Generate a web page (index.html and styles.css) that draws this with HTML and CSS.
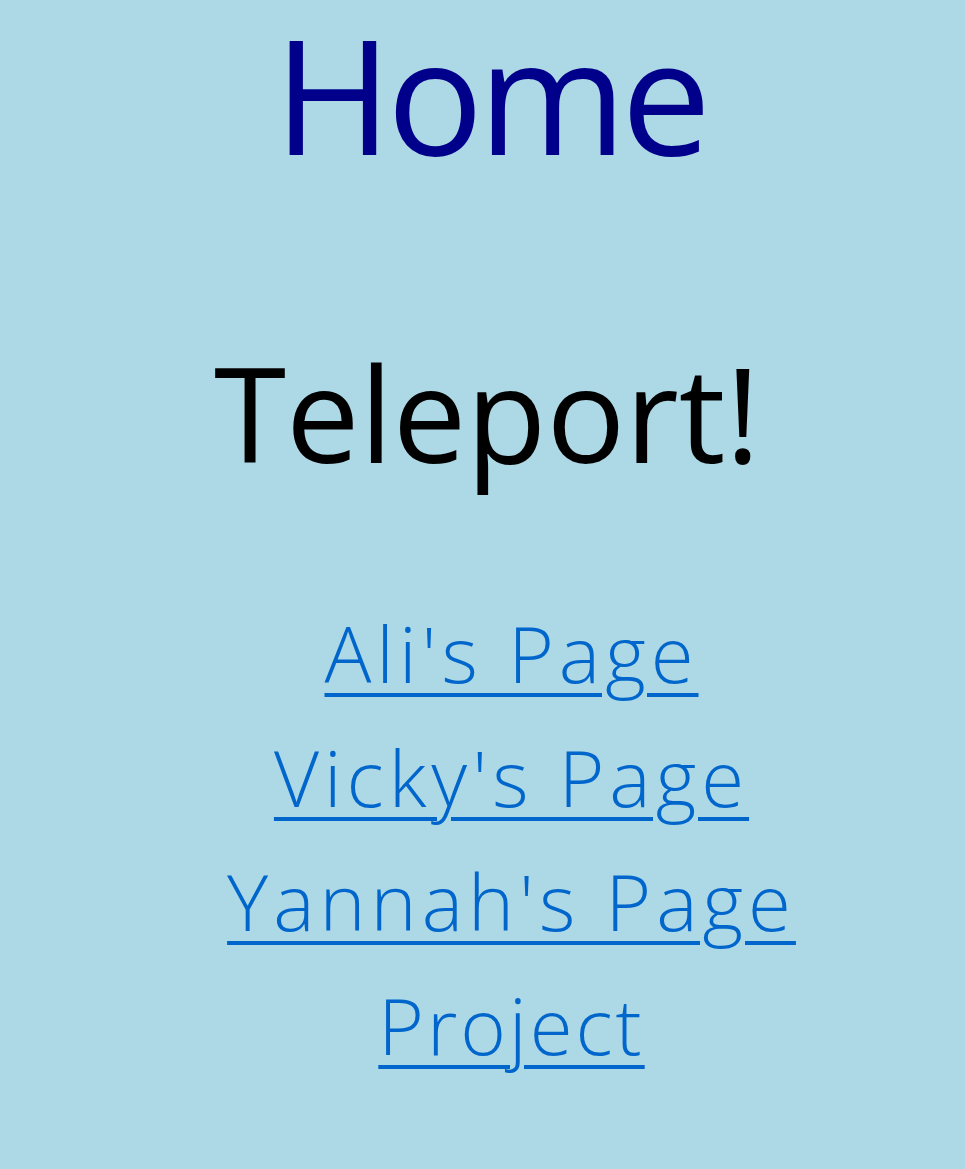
FILE: index.html
```html
<!DOCTYPE html>
<html>
<head>
<meta charset="utf-8">
<link rel="stylesheet" href="styles.css">
</head>
<body>
<h1 class="title">Home</h1>
<h2 class="subtitle">Teleport!</h2>
<nav class="links">
<a href="#">Ali's Page</a>
<a href="#">Vicky's Page</a>
<a href="#">Yannah's Page</a>
<a href="#" class="tight">Project</a>
</nav>
</body>
</html>
```
FILE: styles.css
```css
html, body {
  margin: 0;
  padding: 0;
  background: #add8e6;
}
body {
  display: flex;
  flex-direction: column;
  align-items: center;
  font-family: "Open Sans", "Noto Sans", sans-serif;
}
.title {
  margin: 0;
  padding-left: 15px;
  font-size: 160px;
  font-weight: 380;
  letter-spacing: -5px;
  line-height: 186px;
  color: #00008b;
}
.subtitle {
  margin: 151px 0 0 0;
  padding-left: 9px;
  font-size: 131px;
  font-weight: 400;
  line-height: 150px;
  color: #000;
}
.links {
  margin-top: 104px;
  padding-left: 58px;
  display: flex;
  flex-direction: column;
  align-items: center;
}
.links a {
  font-size: 78px;
  font-weight: 300;
  letter-spacing: 5px;
  line-height: 124px;
  color: #0066cc;
  text-decoration-thickness: 4px;
  text-underline-offset: 10px;
}
.links a.tight {
  letter-spacing: 3px;
}
```
